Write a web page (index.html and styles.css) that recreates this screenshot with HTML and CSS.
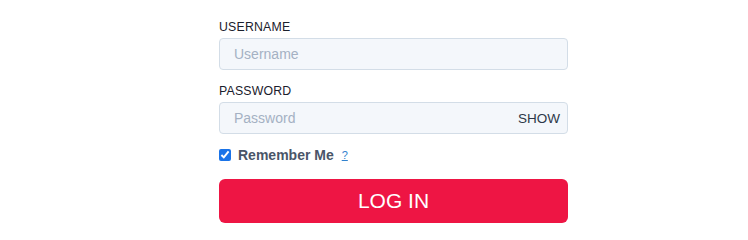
FILE: index.html
```html
<!DOCTYPE html>
<html>
<head>
<meta charset="utf-8">
<link rel="stylesheet" href="styles.css">
</head>
<body>
<form class="login">
  <label class="field-label" for="u">USERNAME</label>
  <input class="field" id="u" type="text" placeholder="Username">
  <label class="field-label pw-label" for="p">PASSWORD</label>
  <div class="pw-wrap">
    <input class="field" id="p" type="password" placeholder="Password">
    <span class="show">SHOW</span>
  </div>
  <div class="remember">
    <input class="check" type="checkbox" checked>
    <span class="remember-text">Remember Me</span>
    <a class="help" href="#">?</a>
  </div>
  <button class="submit" type="button">LOG IN</button>
</form>
</body>
</html>
```
FILE: styles.css
```css
html, body {
  margin: 0;
  padding: 0;
  background: #ffffff;
  font-family: "Liberation Sans", Arial, sans-serif;
}
.login {
  width: 349px;
  margin-left: 219px;
  padding-top: 19px;
  display: flex;
  flex-direction: column;
}
.field-label {
  font-size: 12.3px;
  line-height: 16px;
  letter-spacing: 0.2px;
  color: #1a202c;
  margin-bottom: 3px;
}
.pw-label {
  margin-top: 13px;
}
.field {
  box-sizing: border-box;
  width: 349px;
  height: 32px;
  border: 1px solid #d3dde7;
  border-radius: 4px;
  background: #f4f7fb;
  padding: 0 14px;
  font-family: inherit;
  font-size: 14px;
  color: #2d3748;
  outline: none;
}
.field::placeholder {
  color: #a4b1c3;
}
.pw-wrap {
  position: relative;
}
.show {
  position: absolute;
  right: 8px;
  top: 0;
  height: 32px;
  line-height: 33px;
  font-size: 13.5px;
  color: #2d3748;
}
.remember {
  display: flex;
  align-items: center;
  margin-top: 12px;
  height: 18px;
}
.check {
  margin: 0;
  width: 12px;
  height: 12px;
  accent-color: #1a73e8;
}
.remember-text {
  margin-left: 7px;
  font-size: 14px;
  font-weight: bold;
  color: #4a5568;
}
.help {
  margin-left: 8px;
  font-size: 11px;
  color: #3182ce;
  text-decoration: underline;
}
.submit {
  margin-top: 15px;
  height: 44px;
  border: none;
  border-radius: 6px;
  background: #ee1544;
  color: #ffffff;
  font-family: inherit;
  font-size: 21px;
  padding: 0;
}
```
